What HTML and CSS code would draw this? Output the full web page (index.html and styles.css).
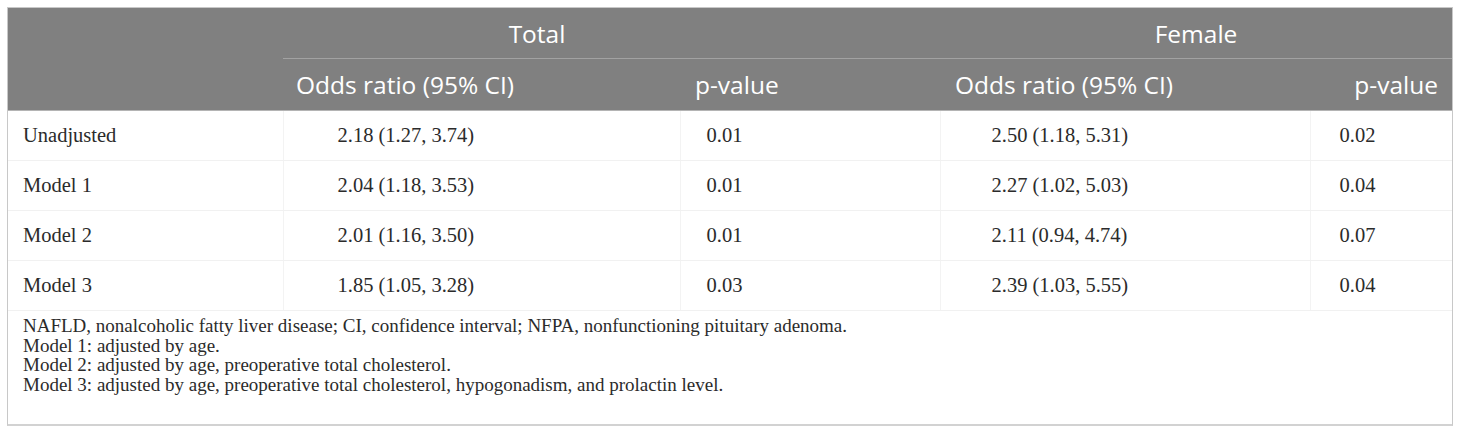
FILE: index.html
```html
<!DOCTYPE html>
<html lang="en">
<head>
  <meta charset="UTF-8">
  <meta name="viewport" content="width=device-width, initial-scale=1.0">
  <title>Odds ratios</title>
  <link rel="stylesheet" href="styles.css">
</head>
<body>
  <div class="table-wrap">
    <table class="data">
      <colgroup>
        <col class="c-label">
        <col class="c-or">
        <col class="c-p">
        <col class="c-or2">
        <col class="c-p2">
      </colgroup>
      <thead>
        <tr class="group">
          <th></th>
          <th colspan="2" class="g-total">Total</th>
          <th colspan="2" class="g-female">Female</th>
        </tr>
        <tr class="sub">
          <th></th>
          <th class="first">Odds ratio (95% CI)</th>
          <th>p-value</th>
          <th>Odds ratio (95% CI)</th>
          <th class="last">p-value</th>
        </tr>
      </thead>
      <tbody>
        <tr>
          <td>Unadjusted</td>
          <td class="or">2.18 (1.27, 3.74)</td>
          <td class="p">0.01</td>
          <td class="or2">2.50 (1.18, 5.31)</td>
          <td class="p2">0.02</td>
        </tr>
        <tr>
          <td>Model 1</td>
          <td class="or">2.04 (1.18, 3.53)</td>
          <td class="p">0.01</td>
          <td class="or2">2.27 (1.02, 5.03)</td>
          <td class="p2">0.04</td>
        </tr>
        <tr>
          <td>Model 2</td>
          <td class="or">2.01 (1.16, 3.50)</td>
          <td class="p">0.01</td>
          <td class="or2">2.11 (0.94, 4.74)</td>
          <td class="p2">0.07</td>
        </tr>
        <tr>
          <td>Model 3</td>
          <td class="or">1.85 (1.05, 3.28)</td>
          <td class="p">0.03</td>
          <td class="or2">2.39 (1.03, 5.55)</td>
          <td class="p2">0.04</td>
        </tr>
      </tbody>
    </table>
    <div class="notes">
      <p>NAFLD, nonalcoholic fatty liver disease; CI, confidence interval; NFPA, nonfunctioning pituitary adenoma.</p>
      <p>Model 1: adjusted by age.</p>
      <p>Model 2: adjusted by age, preoperative total cholesterol.</p>
      <p>Model 3: adjusted by age, preoperative total cholesterol, hypogonadism, and prolactin level.</p>
    </div>
  </div>
</body>
</html>
```
FILE: styles.css
```css
body {
  margin: 0;
  padding: 7px 0 0 7px;
  background: #fff;
}
.table-wrap {
  width: 1446px;
  box-sizing: border-box;
  border: 1px solid #c8c8c8;
  border-bottom-width: 2px;
  border-bottom-color: #d2d2d2;
}
.data {
  width: 100%;
  border-collapse: collapse;
  table-layout: fixed;
}
.c-label { width: 275px; }
.c-or { width: 397px; }
.c-p { width: 260px; }
.c-or2 { width: 370px; }
.c-p2 { width: 142px; }

thead th {
  background: #808080;
  color: #fff;
  font-family: "Open Sans", sans-serif;
  font-weight: normal;
  font-size: 24.5px;
  text-align: left;
  padding: 0 0 0 15px;
  white-space: nowrap;
}
.group th {
  height: 50px;
}
.group th + th {
  border-bottom: 1px solid #a2a2a2;
}
.group .g-total {
  text-align: center;
  padding: 0 149px 0 0;
}
.group .g-female {
  text-align: center;
  padding: 0;
}
.sub th {
  height: 51px;
  border-bottom: 1px solid #b4b4b4;
}
.sub th.first {
  padding-left: 13px;
}
.sub th.last {
  text-align: right;
  padding: 0 14px 0 0;
}

tbody td {
  font-family: "Liberation Serif", "Times New Roman", serif;
  font-size: 20.5px;
  color: #2b2b2b;
  height: 49px;
  padding: 0 0 0 15px;
  border-bottom: 1px solid #f1f1f1;
  border-left: 1px solid #f3f3f3;
  white-space: nowrap;
}
tbody td:first-child {
  border-left: none;
}
tbody td.or { padding-left: 54px; }
tbody td.p { padding-left: 26px; }
tbody td.or2 { padding-left: 51px; }
tbody td.p2 { padding-left: 29px; }

.notes {
  padding: 5px 15px 30px;
  font-family: "Liberation Serif", "Times New Roman", serif;
  font-size: 19px;
  line-height: 19.5px;
  color: #2b2b2b;
}
.notes p {
  margin: 0;
}
```
